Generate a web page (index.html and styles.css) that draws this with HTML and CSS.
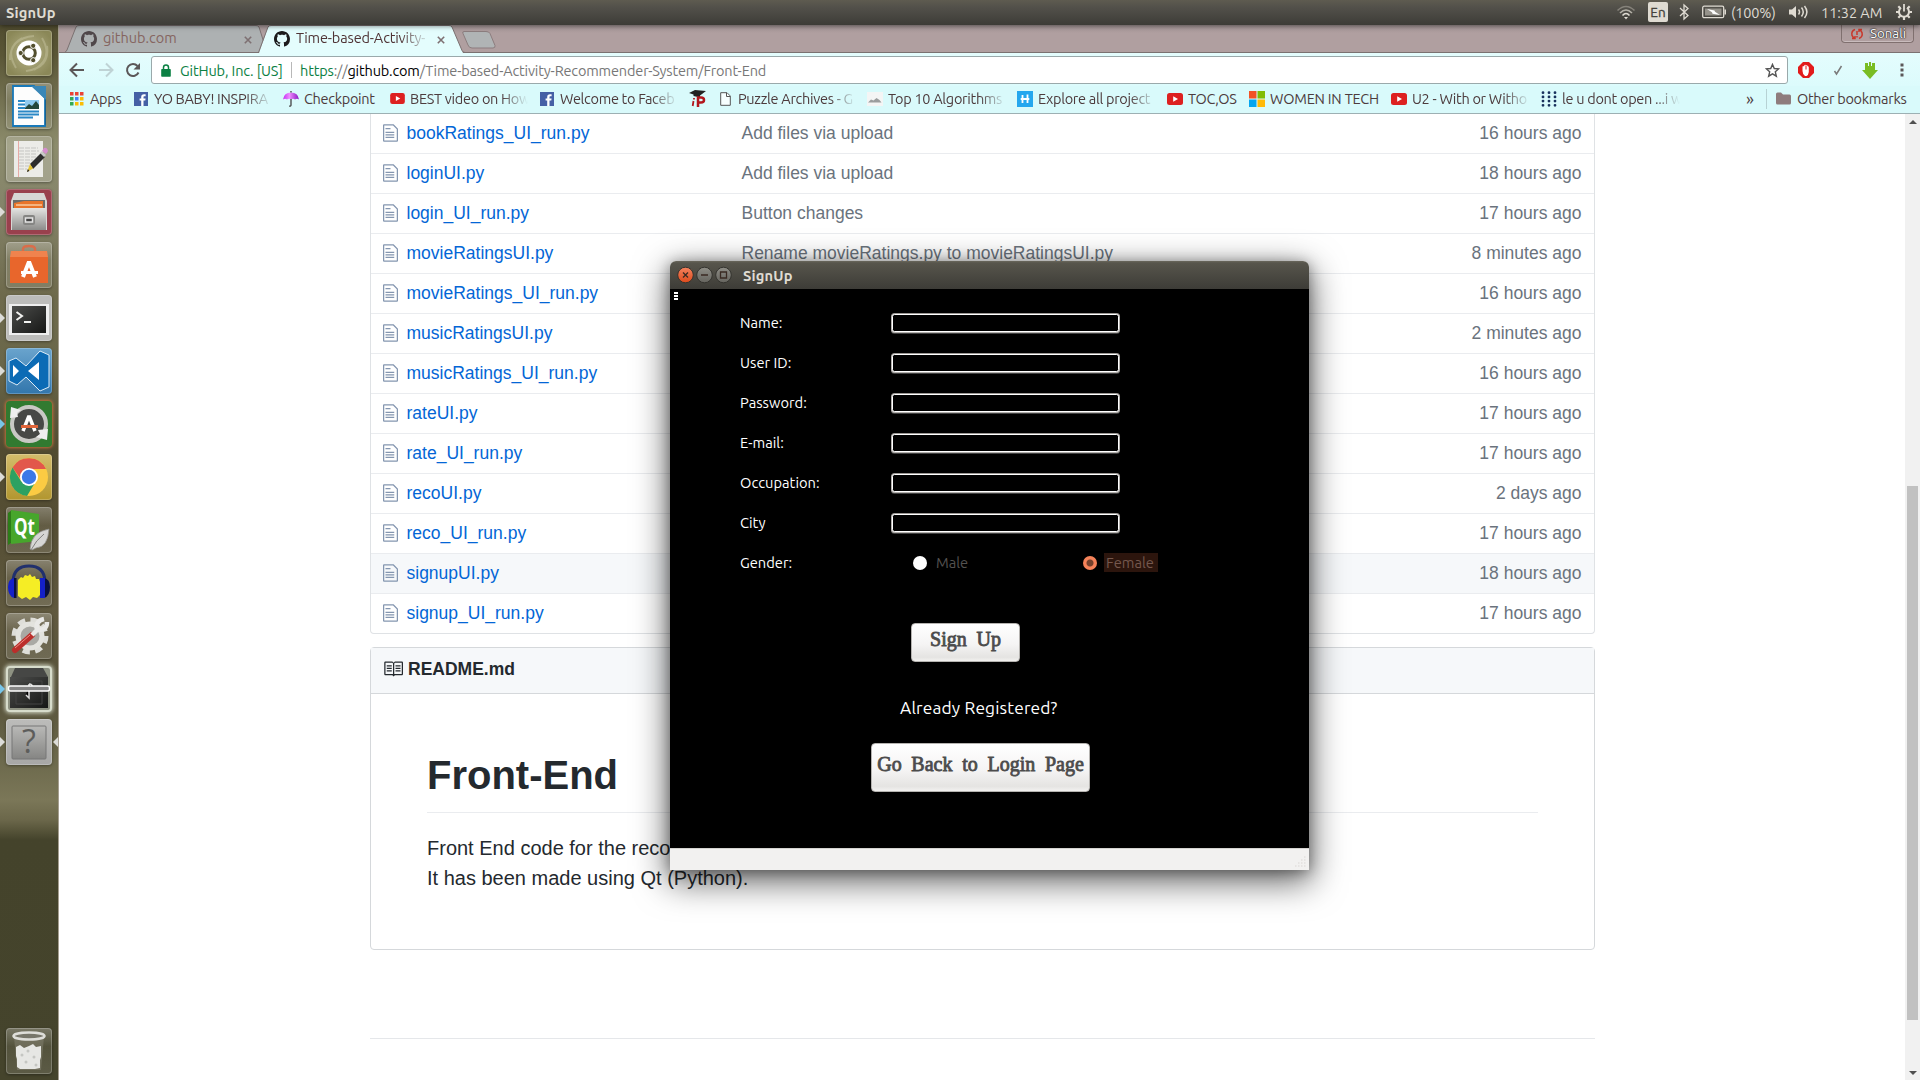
FILE: index.html
```html
<!DOCTYPE html>
<html lang="en">
<head>
<meta charset="utf-8">
<title>SignUp</title>
<link rel="stylesheet" href="styles.css">
</head>
<body>
<svg class="defs" width="0" height="0" aria-hidden="true">
  <defs>
    <linearGradient id="g-steel" x1="0" y1="0" x2="0" y2="1"><stop offset="0" stop-color="#e4e4e2"/><stop offset="1" stop-color="#8c8c8a"/></linearGradient>
    <linearGradient id="g-plate" x1="0" y1="0" x2="0" y2="1"><stop offset="0" stop-color="#b9b9b7"/><stop offset="1" stop-color="#858583"/></linearGradient>
    <linearGradient id="g-dark" x1="0" y1="0" x2="1" y2="1"><stop offset="0" stop-color="#4c4d4b"/><stop offset="1" stop-color="#161716"/></linearGradient>
    <linearGradient id="g-umb" x1="0" y1="0" x2="1" y2="0"><stop offset="0" stop-color="#c12cf2"/><stop offset=".4" stop-color="#ef8cff"/><stop offset="1" stop-color="#8a16c0"/></linearGradient>
    <symbol id="cat" viewBox="0 0 16 16"><path fill="currentColor" d="M8 0C3.58 0 0 3.58 0 8c0 3.54 2.29 6.53 5.47 7.59.4.07.55-.17.55-.38 0-.19-.01-.82-.01-1.49-2.01.37-2.53-.49-2.69-.94-.09-.23-.48-.94-.82-1.13-.28-.15-.68-.52-.01-.53.63-.01 1.08.58 1.23.82.72 1.21 1.87.87 2.33.66.07-.52.28-.87.51-1.07-1.78-.2-3.64-.89-3.64-3.95 0-.87.31-1.59.82-2.15-.08-.2-.36-1.02.08-2.12 0 0 .67-.21 2.2.82.64-.18 1.32-.27 2-.27.68 0 1.36.09 2 .27 1.53-1.04 2.2-.82 2.2-.82.44 1.1.16 1.92.08 2.12.51.56.82 1.27.82 2.15 0 3.07-1.87 3.75-3.65 3.95.29.25.54.73.54 1.48 0 1.07-.01 1.93-.01 2.2 0 .21.15.46.55.38A8.013 8.013 0 0 0 16 8c0-4.42-3.58-8-8-8z"/></symbol>
    <symbol id="file" viewBox="0 0 12 16"><path fill="currentColor" d="M6 5H2V4h4v1zM2 8h7V7H2v1zm0 2h7V9H2v1zm0 2h7v-1H2v1zm10-7.500V14c0 .55-.45 1-1 1H1c-.55 0-1-.45-1-1V2c0-.55.45-1 1-1h7.500L12 4.500zM11 5L8 2H1v12h10V5z"/></symbol>
    <symbol id="fb" viewBox="0 0 14 14"><path fill="#4560a5" d="M0 0h14v14H0z"/><path fill="#fff" d="M7.200 14V8.600H5.600V6.500h1.600V5c0-1.900 1-2.800 2.800-2.800h1.600v2.100h-1.100c-.8 0-1 .4-1 1v1.200h2.100l-.3 2.100H9.500V14z"/></symbol>
    <symbol id="yt" viewBox="0 0 16 12"><rect width="16" height="12" rx="2.500" fill="#dd2020"/><path fill="#fff" d="M6.200 3.200v5.600L11 6z"/></symbol>
  </defs>
</svg>

<header class="panel">
  <span class="panel-title">SignUp</span>
  <div class="tray">
    <svg class="t-wifi" width="20" height="16" viewBox="0 0 20 16" fill="none" stroke-width="1.600"><path stroke="#85827a" d="M1.500 6.500Q10-1.500 18.500 6.500"/><path stroke="#b4b1a8" d="M4 9Q10 3 16 9"/><path stroke="#dfdbd2" d="M6.500 11.500Q10 7.500 13.500 11.500"/><path fill="#dfdbd2" d="M8 13h4L10 15.500z"/></svg>
    <span class="lang">En</span>
    <svg class="t-bt" width="12" height="18" viewBox="0 0 12 18" fill="none" stroke="#dfdbd2" stroke-width="1.300"><path d="M2 5l8 7.500L6 16V2l4 3.500L2 13"/></svg>
    <svg class="t-bat" width="25" height="14" viewBox="0 0 25 14"><rect x=".7" y="1.200" width="21" height="11.500" rx="1.500" fill="none" stroke="#dfdbd2" stroke-width="1.300"/><path fill="#95928a" d="M3 3.500h16.500v7H3z"/><path fill="#dfdbd2" d="M22.500 4.500H24v5h-1.500z"/><path fill="#fff" d="M5 4l7.500 1.500.5 1.300L18 10l-7.500-1.200-.5-1.500z"/></svg>
    <span class="pct">(100%)</span>
    <svg class="t-vol" width="22" height="16" viewBox="0 0 22 16"><path fill="#dfdbd2" d="M1 5.500h3L8 2v12l-4-3.500H1z"/><path fill="none" stroke="#dfdbd2" stroke-width="1.500" d="M10.500 5.500q2 2.500 0 5M13.500 3.500q3.500 4.500 0 9M16.500 2q4.800 6 0 12"/></svg>
    <span class="clock">11:32 AM</span>
    <svg class="t-gear" width="18" height="18" viewBox="0 0 18 18" fill="none" stroke="#dfdbd2"><path stroke-width="2" d="M6 4.800A5 5 0 1 0 12 4.800"/><path stroke-width="1.800" d="M9 1v7.500"/><path stroke-width="2.200" d="M1 9h3M14 9h3M9 14v3M3.300 3.300l2 2M14.700 3.300l-2 2M3.300 14.700l2-2M14.700 14.700l-2-2"/></svg>
  </div>
</header>

<div class="desktop">
<nav class="launcher">
  <div class="tile t-ubuntu"><svg viewBox="0 0 46 46"><g fill="none" stroke="#d9d8b8" stroke-opacity=".35" stroke-width="2"><path d="M4 30Q4 8 28 6M41 16Q44 38 20 41M10 38Q-2 18 16 8M36 8Q48 28 28 40"/></g><circle cx="23" cy="23" r="12.500" fill="#fff"/><circle cx="23" cy="23" r="6.300" fill="none" stroke="#534f2e" stroke-width="3"/><g fill="#534f2e" stroke="#fff" stroke-width="1"><circle cx="14.700" cy="23" r="2.600"/><circle cx="27.200" cy="15.800" r="2.600"/><circle cx="27.200" cy="30.200" r="2.600"/></g></svg></div>
  <div class="tile"><svg viewBox="0 0 46 46"><path fill="#fdfdfd" stroke="#1878b8" stroke-width="1.800" d="M7 3h21l11 12v28H7z"/><path fill="#3a87b7" d="M25 3h15v14z"/><path fill="#18608e" d="M40 17v24l-1 2V16z"/><g stroke="#2a88c6" stroke-width="1.800"><path d="M12 18h7M12 21.500h7M12 25h7M12 28.500h21M12 31.500h21M12 34.500h15"/></g><path fill="#8fcaf0" d="M19 17h14v9H19z"/><path fill="#26483c" d="M19 25l4-4 3 2 4-5 3 4v4H19z"/></svg></div>
  <div class="tile t-pale"><svg viewBox="0 0 46 46"><path fill="#ecece8" d="M8 5h29v36H8z"/><path stroke="#e6a9a4" d="M12.500 5v36"/><path stroke="#c5c5c2" stroke-dasharray="5 1" d="M13 12h19M13 15h20M13 18h17M13 21h19M13 24h14M13 27h17M13 30h10M13 33h8"/><path fill="#2d2d2c" d="M24 28l11-11 4 4-12 12z"/><path fill="#d78fd0" d="M36 15l2-3q3-1 4 3l-2 3z"/><path fill="#c8c8c8" d="M34 17l2-2 4 4-2 2z"/><path fill="#e4c232" d="M21 36l3-8 3 4.500z"/><path fill="#222" d="M21 36l.8-3 1.600 2z"/></svg></div>
  <div class="tile t-red run"><svg viewBox="0 0 46 46"><path fill="#d7d7d5" d="M8 4h30l3 8v29H5V12z"/><path fill="#6c6c6a" d="M7 11h32v9H7z"/><path fill="#e8742a" d="M8 14l10-2h19v7H8z"/><path stroke="#fff4d8" d="M10 16h26"/><path fill="url(#g-steel)" d="M6 19h34v22H6z"/><rect x="17" y="26" width="12" height="10" rx="2" fill="#858583"/><path fill="#444" stroke="#e4e4e4" stroke-width="1.500" d="M19.500 29h7v4h-7z"/></svg></div>
  <div class="tile"><svg viewBox="0 0 46 46"><path fill="none" stroke="#d96d4a" stroke-width="2.500" d="M17 14V7q0-3 6-3t6 3v7"/><path fill="#f0834e" d="M5 9h36l1 6v26H4V15z"/><path fill="#e8662c" d="M4 15h38v26H4z"/><path fill="none" stroke="#fff" stroke-width="4" d="M17 35l5.500-14h1L29 35"/><path stroke="#fff" stroke-width="3" d="M15 30.500h17"/></svg></div>
  <div class="tile t-silver run"><svg viewBox="0 0 46 46"><path fill="#eee" d="M3 9h40v31H3z"/><path fill="url(#g-dark)" d="M6 11h34v27H6z"/><path fill="none" stroke="#f3f3f1" stroke-width="2" d="M10.500 17l5.500 4-5.500 4M18 27h7"/></svg></div>
  <div class="tile t-code run"><svg viewBox="0 0 46 46"><path fill="#0c6bb5" stroke="#dcecf8" d="M3 13l7-3 10 8L34 3l9 4v32l-9 4-14-14-9 8-8-4z"/><path fill="#fff" d="M7 17v12l6-6zM33 14v18L22 23z"/></svg></div>
  <div class="tile t-green run hot"><svg viewBox="0 0 46 46"><circle cx="23" cy="23" r="17" fill="#474846" stroke="#c8c8c4" stroke-width="4"/><path fill="#eee" d="M4 17L5 6l10 3-4 3 1 4zM42 28l-1 11-11-3 4-3-2-4z"/><path fill="none" stroke="#fff" stroke-width="3.500" d="M17 30l5.500-14h1L29 30"/><path stroke="#e0653a" stroke-width="3" d="M15 25.500h17"/></svg></div>
  <div class="tile t-gold run"><svg viewBox="0 0 46 46"><circle cx="23" cy="23" r="19" fill="#fbcb43"/><path fill="#e2574b" d="M6.500 13.500A19 19 0 0 1 40 15H23l-7 12z"/><path fill="#2da162" d="M6.500 13.500A19 19 0 0 0 21 42l9-15-7 4-8-4z"/><circle cx="23" cy="23" r="9" fill="#fff"/><circle cx="23" cy="23" r="7.200" fill="#3c78e8"/></svg></div>
  <div class="tile"><svg viewBox="0 0 46 46"><path fill="#2c7d18" d="M2 6l4-3v32l-4 3z"/><path fill="#47a62c" d="M5 3l28 4v27L5 37z"/><text class="qt" x="8" y="28" textLength="21" lengthAdjust="spacingAndGlyphs">Qt</text><path fill="#d6d6d4" stroke="#8c8c88" stroke-width=".7" d="M24 42q1-17 19-20-1 18-13 19l-4 2z"/><path fill="none" stroke="#81817e" d="M25 43q5-10 13-16"/></svg></div>
  <div class="tile"><svg viewBox="0 0 46 46"><path fill="#f5ed25" d="M12 36V20l3-3 2 1 2-3 3 1 2-2 2 3 3-1 1 3 3 0 2 6-1 10-3 3-4-1-3 3-4-3-4 2z"/><path fill="none" stroke="#21306d" stroke-width="3" d="M7 21Q8 6 23 6t16 15"/><path fill="#1420c8" d="M2 27q0-8 6-9v20q-6-2-6-11z"/><path fill="#09103f" d="M44 27q0-8-6-9v20q6-2 6-11zM8 18h2.500v20H8z"/><path fill="#1420c8" d="M34 18h5v20h-5z"/></svg></div>
  <div class="tile"><svg viewBox="0 0 46 46"><circle cx="24" cy="23" r="15.500" fill="none" stroke="#deded9" stroke-width="6" stroke-dasharray="7 5.170"/><circle cx="24" cy="23" r="12" fill="#a9a9a4" stroke="#e3e3de" stroke-width="5"/><path stroke="#bb2e2b" stroke-width="6" stroke-linecap="round" d="M9 37l17-15"/><path stroke="#ef8a80" stroke-width="1" d="M9 35l15-13"/><path fill="none" stroke="#e9e9e7" stroke-width="4.500" d="M26 22l5-5q-2-9 7-11M31 17q10 1 10-8"/></svg></div>
  <div class="tile t-glow run blue"><svg viewBox="0 0 46 46"><path fill="#464745" d="M9 2h28l5 9H5z"/><path fill="url(#g-dark)" d="M4 11h38v31H4z"/><path fill="none" stroke="#444" d="M10 15h26v23H10z"/><path stroke="#ddd" stroke-width="1.500" d="M23 18v14l-3-3m3-11q4 0 3 4"/><rect x="2.500" y="20" width="41" height="5" rx="2" fill="#858585" stroke="#fff" stroke-width="1.500"/></svg></div>
  <div class="tile t-grey run focus"><svg viewBox="0 0 46 46"><rect x="6" y="7" width="34" height="33" rx="1" fill="url(#g-plate)" stroke="#777"/><text class="q" x="23" y="34" text-anchor="middle">?</text></svg></div>
  <div class="tile t-trash"><svg viewBox="0 0 46 46"><path fill="#7e7d6d" fill-opacity=".6" d="M8 9h30l-3 33H11z"/><path fill="#e6e7e4" d="M10 19l4-2 4 3 5-2 4-2 3 3 5-1 0 11-1 3 0 8-5 1H14l-3-2 0-8-1-3z"/><g fill="#c4c6c2"><circle cx="16" cy="27" r="1.500"/><circle cx="22" cy="23" r="1.500"/><circle cx="28" cy="29" r="1.500"/><circle cx="20" cy="34" r="1.500"/><circle cx="30" cy="37" r="1.500"/></g><ellipse cx="23" cy="8" rx="15.500" ry="3.500" fill="#77766a" stroke="#deded9" stroke-width="2.500"/></svg></div>
</nav>

<section class="browser">
  <div class="tabstrip">
    <svg class="tab-shapes" width="440" height="28" viewBox="0 0 440 28"><path fill="#adb1b2" stroke="#7b7171" d="M5.500 27.500Q7 27 8 25L17 2q1-1.500 3-1.500h177q2 0 3 1.500l8 25.500z"/><path fill="#b0b4b5" stroke="#8c7d7e" d="M404 8.500q-1-2 1-2h22q3 0 4 2l5 12q.5 2.500-2 2.500h-21q-3 0-4-3z"/><path fill="#e4fdfd" d="M200 28L209 2q.8-1.500 3-1.500H390q2 0 3 1.500l11 26z"/><path fill="none" stroke="#7b7171" d="M0 27.500h199.500L209 2q.8-1.500 3-1.500H390q2 0 3 1.500l10 23.500q1 2 3 2H440"/></svg>
    <div class="tab tab-a"><svg width="16" height="16"><use href="#cat"/></svg><span class="tab-text">github.com</span><svg class="x" width="8" height="8" viewBox="0 0 8 8"><path d="M.8.800l6.400 6.400M7.200.800L.8 7.200"/></svg></div>
    <div class="tab tab-b"><svg width="16" height="16"><use href="#cat"/></svg><span class="tab-text fade">Time-based-Activity-</span><svg class="x" width="8" height="8" viewBox="0 0 8 8"><path d="M.8.800l6.400 6.400M7.200.800L.8 7.200"/></svg></div>
    <div class="profile"><svg width="14" height="12" viewBox="0 0 14 12" fill="none" stroke="#c9382b" stroke-width="1.500"><path d="M5 1.500Q1 3 2 7.500l2 3M2 10.500h3V8M9 10.500q4-1.500 3-6l-2-3M12 1.500H9V4"/><path d="M7 3v4M7 8v1.500"/></svg><span>Sonali</span></div>
  </div>

  <div class="toolbar">
    <svg class="nav-back" width="16" height="16" viewBox="0 0 16 16" fill="none" stroke="#5b5758" stroke-width="2"><path d="M15 8H2M8 1.500L1.500 8 8 14.500"/></svg>
    <svg class="nav-fwd" width="16" height="16" viewBox="0 0 16 16" fill="none" stroke="#bfd3d5" stroke-width="2"><path d="M1 8h13M8 1.500L14.500 8 8 14.500"/></svg>
    <svg class="nav-rel" width="16" height="16" viewBox="0 0 16 16"><path fill="none" stroke="#5b5758" stroke-width="2" d="M13.500 10.500A6 6 0 1 1 12.500 4"/><path fill="#5b5758" d="M15 1v6.500H8.500z"/></svg>
    <div class="omnibox">
      <svg class="lock" width="10" height="13" viewBox="0 0 10 13"><path fill="#0b8043" d="M1 5h8q.8 0 .8.800V12q0 .800-.8.800H1q-.8 0-.8-.800V5.800Q.2 5 1 5z"/><path fill="none" stroke="#0b8043" stroke-width="1.500" d="M2.500 5.500V3.500Q2.500 1 5 1t2.500 2.500v2"/></svg>
      <span class="ev">GitHub, Inc. [US]</span><span class="bar"></span>
      <span class="url"><span class="sec">https</span>://<b>github.com</b>/Time-based-Activity-Recommender-System/Front-End</span>
      <svg class="star" width="15" height="15" viewBox="0 0 16 16" fill="none" stroke="#555" stroke-width="1.500"><path d="M8 1.500l1.900 4.400 4.600.400-3.500 3.100 1.100 4.700L8 11.600l-4.100 2.500L5 9.400 1.500 6.300l4.600-.4z"/></svg>
    </div>
    <div class="ext">
      <svg width="16" height="16" viewBox="0 0 16 16"><path fill="#e21b1b" d="M5 0h6L16 5v6L11 16H5L0 11V5z"/><path fill="#fff" d="M4.500 4.500q1-.8 1.500 0L6.500 3q1-.6 1.500.3 1.200-.6 1.500.7 1.300 0 1.300 1.500V10q-.3 3-2.300 4H7Q4.500 12 4.500 9z"/><path stroke="#e21b1b" stroke-width="1" d="M8 3.500v4"/></svg>
      <svg width="12" height="12" viewBox="0 0 12 12"><path fill="none" stroke="#7a7a7a" stroke-width="1.500" d="M2.500 7l2 3L9.500 2"/></svg>
      <svg width="16" height="17" viewBox="0 0 16 17"><path fill="#79bd23" d="M3 1h3v3h1V0h2v4h1V1h3v7h3l-8 9-8-9h3z"/></svg>
      <svg width="4" height="14" viewBox="0 0 4 14" fill="#5b5758"><path d="M.5.500h3v3h-3zM.5 5.500h3v3h-3zM.5 10.500h3v3h-3z"/></svg>
    </div>
  </div>

  <div class="bookmarks">
    <div class="bm b1"><svg width="14" height="14" viewBox="0 0 14 14"><path fill="#ea4335" d="M0 0h3.500v3.500H0zM5 0h3.500v3.500H5zM10 0h3.500v3.500H10z"/><path fill="#34a853" d="M0 5h3.500v3.500H0zM0 10h3.500v3.500H0z"/><path fill="#4285f4" d="M5 5h3.500v3.500H5z"/><path fill="#fbbc05" d="M10 5h3.500v3.500H10zM5 10h3.500v3.500H5zM10 10h3.500v3.500H10z"/></svg><span>Apps</span></div>
    <div class="bm b2"><svg width="14" height="14"><use href="#fb"/></svg><span class="fade">YO BABY! INSPIRA</span></div>
    <div class="bm b3"><svg width="16" height="16" viewBox="0 0 16 16"><path fill="url(#g-umb)" d="M0 8.500Q1 1.500 8 1.500t8 7q-2-1.500-4 0-2-1.500-4 0-2-1.500-4 0-2-1.500-4 0z"/><path fill="none" stroke="#444" stroke-width="1.300" d="M8 0v1.500M8 8v6q0 1.500-1.800 1"/></svg><span>Checkpoint</span></div>
    <div class="bm b4"><svg width="15" height="11"><use href="#yt"/></svg><span class="fade">BEST video on How</span></div>
    <div class="bm b5"><svg width="14" height="14"><use href="#fb"/></svg><span class="fade">Welcome to Faceb</span></div>
    <div class="bm b6"><svg width="17" height="17" viewBox="0 0 17 17"><path fill="#222" d="M0 3l6-3 11 1-6 4.500v2L4.500 6V4.500z"/><path fill="none" stroke="#b3161d" stroke-width="2.500" d="M9 17V7.500h3q3 0 3 2.500t-3 2.500H9"/><path stroke="#b3161d" stroke-width="1.800" d="M4.500 11l-.8 5M5 8v1.500"/></svg></div>
    <div class="bm b7"><svg width="11" height="14" viewBox="0 0 11 14" fill="#f7ffff" stroke="#555"><path d="M.7.700H7L10.300 4v9.300H.7z"/><path d="M6.500 1v3.500H10"/></svg><span class="fade">Puzzle Archives - G</span></div>
    <div class="bm b8"><svg width="16" height="16" viewBox="0 0 16 16"><path fill="#f4f5f5" d="M0 1h16v14H0z"/><path fill="#9b9d9e" d="M1 11.500L4 8.500l2.500 1 3-2.500 3 2 2 2.500z"/></svg><span class="fade">Top 10 Algorithms</span></div>
    <div class="bm b9"><svg width="16" height="16" viewBox="0 0 16 16"><path fill="#25a7ee" d="M0 0h16v16H0z"/><path fill="none" stroke="#fff" stroke-width="1.800" d="M5.500 4v3L4.500 8 5.500 9v3M10.500 3.500V7l1 1-1 1v3M6 8h4.500"/></svg><span class="fade">Explore all project</span></div>
    <div class="bm b10"><svg width="16" height="12"><use href="#yt"/></svg><span>TOC,OS</span></div>
    <div class="bm b11"><svg width="16" height="16" viewBox="0 0 16 16"><path fill="#f35325" d="M0 0h7.500v7.500H0z"/><path fill="#81bc06" d="M8.500 0H16v7.500H8.500z"/><path fill="#05a6f0" d="M0 8.500h7.500V16H0z"/><path fill="#ffba08" d="M8.500 8.500H16V16H8.500z"/></svg><span>WOMEN IN TECH</span></div>
    <div class="bm b12"><svg width="16" height="12"><use href="#yt"/></svg><span class="fade">U2 - With or Witho</span></div>
    <div class="bm b13"><svg width="16" height="16" viewBox="0 0 16 16"><path stroke="#18305c" stroke-width="2.800" stroke-linecap="round" d="M2 1.700h.01M8 1.700h.01M14 1.700h.01M2 5.900h.01M8 5.900h.01M14 5.900h.01M2 10.100h.01M8 10.100h.01M14 10.100h.01M2 14.300h.01M8 14.300h.01M14 14.300h.01"/></svg><span class="fade">le u dont open ...i w</span></div>
    <div class="bm more">»</div>
    <div class="bm other"><svg width="15" height="13" viewBox="0 0 15 13"><path fill="#8e7c7d" d="M0 2Q0 .500 1.500.500H5L7 2.500h6.500q1.500 0 1.500 1.500v7q0 1.500-1.500 1.500h-12Q0 12.500 0 11z"/></svg><span>Other bookmarks</span></div>
  </div>

  <div class="viewport">
    <main class="page">
      <div class="files">
        <div class="row"><svg><use href="#file"/></svg><a>bookRatings_UI_run.py</a><span>Add files via upload</span><time>16 hours ago</time></div>
        <div class="row"><svg><use href="#file"/></svg><a>loginUI.py</a><span>Add files via upload</span><time>18 hours ago</time></div>
        <div class="row"><svg><use href="#file"/></svg><a>login_UI_run.py</a><span>Button changes</span><time>17 hours ago</time></div>
        <div class="row"><svg><use href="#file"/></svg><a>movieRatingsUI.py</a><span>Rename movieRatings.py to movieRatingsUI.py</span><time>8 minutes ago</time></div>
        <div class="row"><svg><use href="#file"/></svg><a>movieRatings_UI_run.py</a><span></span><time>16 hours ago</time></div>
        <div class="row"><svg><use href="#file"/></svg><a>musicRatingsUI.py</a><span></span><time>2 minutes ago</time></div>
        <div class="row"><svg><use href="#file"/></svg><a>musicRatings_UI_run.py</a><span></span><time>16 hours ago</time></div>
        <div class="row"><svg><use href="#file"/></svg><a>rateUI.py</a><span></span><time>17 hours ago</time></div>
        <div class="row"><svg><use href="#file"/></svg><a>rate_UI_run.py</a><span></span><time>17 hours ago</time></div>
        <div class="row"><svg><use href="#file"/></svg><a>recoUI.py</a><span></span><time>2 days ago</time></div>
        <div class="row"><svg><use href="#file"/></svg><a>reco_UI_run.py</a><span></span><time>17 hours ago</time></div>
        <div class="row hover"><svg><use href="#file"/></svg><a>signupUI.py</a><span></span><time>18 hours ago</time></div>
        <div class="row"><svg><use href="#file"/></svg><a>signup_UI_run.py</a><span></span><time>17 hours ago</time></div>
      </div>
      <article class="readme">
        <h3><svg width="20" height="20" viewBox="0 0 16 16"><path fill="currentColor" d="M3 5h4v1H3V5zm0 3h4V7H3v1zm0 2h4V9H3v1zm11-5h-4v1h4V5zm0 2h-4v1h4V7zm0 2h-4v1h4V9zm2-6v9c0 .55-.45 1-1 1H9.500l-1 1-1-1H2c-.55 0-1-.45-1-1V3c0-.55.45-1 1-1h5.500l1 1 1-1H15c.55 0 1 .45 1 1zm-8 .5L7.500 3H2v9h6V3.500zm7-.5H9.500l-.5.5V12h6V3z"/></svg>README.md</h3>
        <div class="md">
          <h1>Front-End</h1>
          <p>Front End code for the reco<br>It has been made using Qt (Python).</p>
        </div>
      </article>
      <div class="rule"></div>
    </main>
    <div class="scroll"><i class="up"></i><div class="thumb"></div><i class="down"></i></div>
  </div>
</section>
</div>

<section class="dialog">
  <header class="titlebar">
    <svg width="56" height="18" viewBox="0 0 56 18"><defs><linearGradient id="g-close" x1="0" y1="0" x2="0" y2="1"><stop offset="0" stop-color="#f4835f"/><stop offset="1" stop-color="#dd4a1b"/></linearGradient><linearGradient id="g-btn" x1="0" y1="0" x2="0" y2="1"><stop offset="0" stop-color="#8e8d86"/><stop offset="1" stop-color="#65645e"/></linearGradient></defs><g stroke="#34332e"><circle cx="8.500" cy="9" r="7.800" fill="url(#g-close)"/><circle cx="27.500" cy="9" r="7.800" fill="url(#g-btn)"/><circle cx="46.500" cy="9" r="7.800" fill="url(#g-btn)"/></g><path fill="none" stroke="#3a2a22" stroke-width="1.300" d="M6 6.500l5 5M11 6.500l-5 5M24 9h7M43.500 6h6v6h-6z"/></svg>
    <span>SignUp</span>
  </header>
  <div class="form">
    <div class="grip"><i></i><i></i><i></i></div>
    <div class="field"><label>Name:</label><input type="text"></div>
    <div class="field"><label>User ID:</label><input type="text"></div>
    <div class="field"><label>Password:</label><input type="text"></div>
    <div class="field"><label>E-mail:</label><input type="text"></div>
    <div class="field"><label>Occupation:</label><input type="text"></div>
    <div class="field"><label>City</label><input type="text"></div>
    <div class="field"><label>Gender:</label><div class="radio male"><i></i><span>Male</span></div><div class="radio female"><i></i><span>Female</span></div></div>
    <button class="btn signup">Sign Up</button>
    <p class="already">Already Registered?</p>
    <button class="btn back">Go Back to Login Page</button>
  </div>
  <footer class="statusbar"><svg width="13" height="13" viewBox="0 0 13 13"><path stroke="#e2e0dd" stroke-width="1.500" stroke-dasharray="1.500 1.500" d="M10 2h2M7 5h5M4 8h8M1 11h11"/></svg></footer>
</section>
</body>
</html>
```
FILE: styles.css
```css
* { box-sizing: border-box; }
html, body { height: 100%; }
body {
  margin: 0;
  display: flex;
  flex-direction: column;
  overflow: hidden;
  background: #fff;
  font-family: Ubuntu, "Open Sans", "Noto Sans", sans-serif;
  font-size: 14.5px;
}
.defs { position: absolute; }
svg { display: block; flex: none; }
i { font-style: normal; }

/* top panel */
.panel {
  flex: none;
  height: 25px;
  display: flex;
  align-items: center;
  justify-content: space-between;
  padding: 0 7px 1px 6px;
  background: linear-gradient(#5e5b50, #52504a 30%, #3d3c37);
  color: #dfdbd2;
  position: relative;
  box-shadow: 0 1px 5px rgba(0, 0, 0, .5);
  z-index: 2;
}
.panel-title { font-weight: 700; font-size: 14.67px; letter-spacing: .15px; }
.tray { display: flex; align-items: center; }
.lang {
  width: 20px; height: 20px; margin: 0 10px 0 12px;
  background: #dfdbd2; color: #45433d; border-radius: 2px;
  font-size: 13.5px; line-height: 20px; text-align: center;
  -webkit-text-stroke: .3px #45433d;
}
.t-bat { margin: 0 4px 0 12px; }
.pct { width: 46px; margin-right: 11px; letter-spacing: -.2px; }
.clock { width: 63px; margin: 0 11px 0 11px; white-space: nowrap; letter-spacing: -.05px; }

.desktop { flex: 1; display: flex; min-height: 0; }

/* launcher */
.launcher {
  width: 59px; flex: none;
  display: flex; flex-direction: column; gap: 7px;
  padding: 5px 0 6px 6px;
  border-right: 1px solid #a59e90;
  background: linear-gradient(#514d30 0, #5a5636 30px, #8c8c6c 120px, #85846a 180px, #6e6a4c 270px, #6a674a 340px, #514b30 425px, #564f35 510px, #60593f 590px, #57523a 670px, #6c694c 735px, #7b7758 775px, #6b674a 795px, #44432b 815px, #45442c 100%);
}
.tile {
  width: 46px; height: 46px; flex: none;
  border-radius: 4px;
  background: linear-gradient(rgba(255,255,255,.28), rgba(255,255,255,.08) 40%, rgba(255,255,255,.12));
  box-shadow: inset 0 0 0 1px rgba(255,255,255,.22), 0 1px 3px rgba(0,0,0,.35);
  position: relative;
}
.tile svg { width: 46px; height: 46px; }
.t-ubuntu { background: radial-gradient(#b5b288, #8b8858 80%); }
.t-pale { background: rgba(255,255,255,.22); }
.t-red { background: #99404d; }
.t-silver { background: #bcbcba; }
.t-code { background: linear-gradient(#6aa4cd, #3276ac); }
.t-green { background: #317a30; }
.t-gold { background: linear-gradient(#d3bd6c, #b2962f); }
.t-grey { background: linear-gradient(#bcbcba, #a7a7a6); }
.hot { box-shadow: 0 0 3px 1px #c0703c; }
.t-glow { background: #8e9282; box-shadow: inset 0 0 0 2px #d7dccb, 0 0 4px 1px #d7dccb; }
.t-trash { margin-top: auto; }
.run::before, .focus::after {
  content: ""; position: absolute; top: 18px; left: -6px;
  border: 5px solid transparent; border-left-color: #dcdcd8; border-right: 0;
}
.focus::after { left: auto; right: -6px; border-right: 5px solid #dcdcd8; border-left: 0; }
.hot::before, .blue::before { border-left-color: #78c5e8; }
.qt { font: 700 24px "Open Sans", sans-serif; fill: #fff; }
.q { font: 32px "Open Sans", sans-serif; fill: #5d5d5b; }

/* browser frame */
.browser { flex: 1; display: flex; flex-direction: column; min-width: 0; color: #4d3b3d; }
.tabstrip {
  height: 28px; flex: none; position: relative;
  display: flex; align-items: flex-start;
  background: linear-gradient(#a59798, #b09fa0 8px);
  border-bottom: 1px solid #7b7171;
}
.tab-shapes { position: absolute; left: 0; top: 0; }
.tab { position: relative; display: flex; align-items: center; height: 27px; }
.tab-a { margin-left: 22px; color: #50474a; width: 193px; }
.tab-b { color: #1c1b1c; width: 190px; }
.tab-text { margin-left: 6px; width: 134px; white-space: nowrap; overflow: hidden; color: #4f3335; letter-spacing: -.15px; padding-bottom: 2px; }
.tab-a .tab-text { color: #856560; width: 132px; letter-spacing: 0; }
.fade { -webkit-mask-image: linear-gradient(90deg, #000 78%, transparent); mask-image: linear-gradient(90deg, #000 78%, transparent); }
.x { margin: 2px 0 0 9px; fill: none; stroke: #7e7072; stroke-width: 1.6px; }
.tab-b .x { margin-left: 7px; }
.profile {
  position: relative; margin-left: auto; margin-right: 6px;
  width: 73px; height: 18px; padding-left: 8px;
  display: flex; align-items: center; gap: 6px;
  border: 1px solid #80706f; border-top: 0; border-radius: 0 0 4px 4px;
  box-shadow: inset 0 -1px 0 #c9bcbd;
  font-size: 13.3px; color: #fff;
  text-shadow: 0 0 1px #222, 0 0 2px #222, 0 0 1px #222;
}

.toolbar { height: 33px; flex: none; display: flex; align-items: center; background: linear-gradient(#e4fdfd, #dcfbfc); padding: 1px 0 0 10px; }
.nav-fwd { margin: 0 11px 0 13px; }
.omnibox {
  margin-left: 10px; margin-bottom: 1px;
  width: 1637px; height: 28px;
  display: flex; align-items: center;
  background: #fff; border: 1px solid #9aa9ab; border-radius: 3px;
  padding: 1px 7px 0 9px; white-space: nowrap;
}
.ev { margin-left: 9px; width: 102px; color: #0b8043; letter-spacing: -.12px; }
.bar { width: 1px; height: 16px; margin: 0 8px 0 9px; background: #b8b8b8; }
.url { color: #777; letter-spacing: -.15px; }
.url b { font-weight: 400; color: #000; }
.sec { color: #0b8043; }
.star { margin-left: auto; }
.ext { display: grid; grid-template-columns: repeat(4, 32px); align-items: center; justify-items: center; margin-left: 2px; }

.bookmarks {
  height: 28px; flex: none; display: flex; align-items: center;
  padding: 0 13px 2px 11px;
  background: #d9fafb; border-bottom: 1px solid #9db0b3;
  white-space: nowrap; letter-spacing: -.3px;
}
.bm { display: flex; align-items: center; gap: 6px; flex: none; }
.bm .fade { width: 118px; overflow: hidden; }
.b1 { width: 64px; }
.b2 { width: 149px; }
.b3 { width: 107px; gap: 5px; }
.b4 { width: 150px; gap: 5px; }
.b5 { width: 149px; }
.b6 { width: 31px; }
.b7 { width: 147px; gap: 7px; }
.b8, .b9 { width: 150px; gap: 5px; }
.b10 { width: 82px; gap: 5px; }
.b11 { width: 142px; gap: 5px; }
.b11 span { letter-spacing: -.2px; }
.b12 { width: 150px; gap: 5px; }
.b13 { width: 205px; gap: 5px; }
.more { width: 20px; font-size: 17px; }
.other { flex: 1; height: 20px; border-left: 1px solid #b7d2d4; padding-left: 9px; }

/* web page */
.viewport { flex: 1; display: flex; min-height: 0; overflow: hidden; }
.page { flex: 1; padding: 0 310px 0 311px; font-family: "Liberation Sans", Arial, sans-serif; }
.files { border: 1px solid #dfe2e5; border-top: 0; border-radius: 0 0 4px 4px; }
.row {
  height: 40px; display: grid; align-items: center;
  grid-template-columns: 23.5px 335px 1fr auto;
  padding: 0 12.5px 0 12px;
  border-bottom: 1px solid #eaecef;
  font-size: 17.5px; color: #6a737d; white-space: nowrap;
}
.row:last-child { border-bottom: 0; height: 39px; padding-bottom: 0; }
.row svg { width: 15px; height: 20px; color: #8496b0; margin-bottom: 2px; }
.row a { color: #0366d6; }
.hover { background: #f6f8fa; }
.readme { margin-top: 13px; border: 1px solid #d5d8db; border-radius: 4px; height: 303px; color: #24292e; }
.readme h3 {
  margin: 0; height: 46px; padding: 0 0 3px 12px;
  display: flex; align-items: center; gap: 5px;
  background: #f6f8fa; border-bottom: 1px solid #d5d8db;
  font-size: 17.5px;
}
.md { padding: 56px; }
.md h1 { margin: 0 0 20px; padding-bottom: 12px; border-bottom: 1px solid #eaecef; font-size: 40px; line-height: 50px; }
.md p { margin: 0; font-size: 20px; line-height: 30px; }
.rule { margin-top: 88px; border-top: 1px solid #e5e7ea; }
.scroll { width: 15px; background: #f1f1f1; display: flex; flex-direction: column; align-items: center; padding: 6px 0 5px; }
.thumb { width: 11px; height: 534px; background: #c1c1c1; margin-top: 362px; margin-bottom: auto; }
.up, .down { border: 4px solid transparent; }
.up { border-top: 0; border-bottom-color: #505050; }
.down { border-bottom: 0; border-top-color: #505050; }

/* sign-up window */
.dialog {
  position: absolute; left: 670px; top: 261px;
  width: 639px; height: 609px;
  display: flex; flex-direction: column;
  border-radius: 6px 6px 0 0;
  box-shadow: 0 10px 34px 2px rgba(0,0,0,.6), 0 2px 14px rgba(0,0,0,.35);
  z-index: 3;
}
.titlebar {
  height: 28px; flex: none; display: flex; align-items: center; gap: 10px; padding-left: 7px;
  border-radius: 6px 6px 0 0;
  background: linear-gradient(#6a675c 0, #57554c 2px, #3d3c37);
  color: #dfdbd2; font-weight: 700; font-size: 14.67px; letter-spacing: .15px;
}
.titlebar span { padding-top: 1px; }
.form { flex: 1; background: #000; color: #fff; display: flex; flex-direction: column; align-items: flex-start; font-size: 14.67px; }
.grip { height: 14px; padding: 3px 0 0 4px; }
.grip i { display: block; width: 4px; height: 2px; background: #fff; margin-bottom: 1px; }
.field { height: 40px; display: flex; align-items: center; padding-left: 70px; }
.field label { width: 152px; padding-bottom: 1px; letter-spacing: .03px; }
.field input {
  width: 227px; height: 18px; padding: 0; background: #000; margin-bottom: 1px;
  border: 1px solid #fff; border-radius: 2.5px;
  box-shadow: 0 0 0 1px rgba(255, 250, 245, .6), 0 1px 0 1px rgba(255, 255, 255, .25);
}
.radio { display: flex; align-items: center; color: #545250; padding-bottom: 1px; }
.radio i { width: 14px; height: 14px; border-radius: 50%; background: #fff; }
.male { width: 190px; padding-left: 21px; gap: 9px; }
.female i { margin-left: 1px; background: radial-gradient(circle, #74402c 3px, #f58259 4px); }
.female span { margin-left: 7px; width: 54px; height: 19px; line-height: 19px; padding-left: 2px; background: #2c150d; color: #75584e; }
.btn {
  border: 1px solid #b5b3b0; border-radius: 4px; padding: 0;
  background: linear-gradient(#fff, #f5f4f4 55%, #e5e4e2 90%, #f2f1f0);
  color: #4c4c4c; font: 20px "Liberation Serif", "Times New Roman", serif;
  -webkit-text-stroke: .8px #4c4c4c;
  word-spacing: 4.7px; white-space: nowrap;
}
.signup { width: 109px; height: 39px; margin: 40px 0 0 241px; padding-bottom: 7px; }
.already { margin: 34px 0 0 230px; font-size: 17.33px; line-height: 24px; letter-spacing: .15px; }
.back { width: 219px; height: 49px; margin: 23px 0 0 201px; padding-bottom: 7px; }
.statusbar { height: 22px; flex: none; background: #f2f1f0; border-top: 1px solid #d5d3d0; display: flex; justify-content: flex-end; align-items: flex-end; padding: 2px; }
```
